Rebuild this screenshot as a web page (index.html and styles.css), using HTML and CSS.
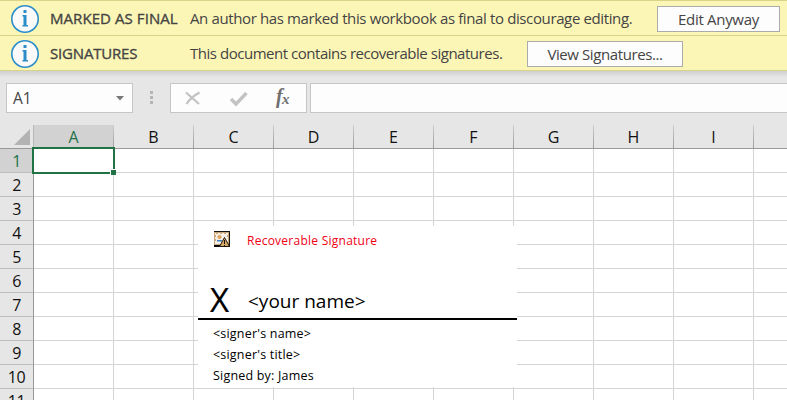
FILE: index.html
```html
<!DOCTYPE html>
<html lang="en">
<head>
<meta charset="utf-8">
<title>Workbook</title>
<link rel="stylesheet" href="styles.css">
</head>
<body>
<div class="app">
  <div class="message">
    <svg class="info" viewBox="0 0 28 28"><circle cx="14" cy="14" r="13.2" fill="#fafafa" stroke="#2b8dca" stroke-width="1.6"/><path d="M12.5 5h3v3h-3zM11.500 10h4v10H17v1.500h-5.500V20h1v-8.500h-1z" fill="#2b8dca"/></svg>
    <span class="heading"><span class="t-final">MARKED AS FINAL</span></span>
    <span class="body-text t-author">An author has marked this workbook as final to discourage editing.</span>
    <button class="edit"><span>Edit Anyway</span></button>
  </div>
  <div class="message">
    <svg class="info" viewBox="0 0 28 28"><circle cx="14" cy="14" r="13.2" fill="#fafafa" stroke="#2b8dca" stroke-width="1.6"/><path d="M12.5 5h3v3h-3zM11.500 10h4v10H17v1.500h-5.500V20h1v-8.500h-1z" fill="#2b8dca"/></svg>
    <span class="heading"><span class="t-sig">SIGNATURES</span></span>
    <span class="body-text t-doc">This document contains recoverable signatures.</span>
    <button class="view"><span>View Signatures...</span></button>
  </div>
  <div class="formula-bar">
    <div class="name-box"><span>A1</span><svg width="8" height="5" viewBox="0 0 8 5"><path d="M0 0h8L4 4.500z" fill="#777"/></svg></div>
    <div class="grip"><i></i><i></i><i></i></div>
    <div class="actions">
      <svg width="135" height="28" viewBox="0 0 135 28">
        <path d="M15 8.500 28 20M28.500 8.500Q20 13 15.500 20" fill="none" stroke="#c3c3c3" stroke-width="2.300"/>
        <path d="M60 15l5 5L75.500 9" fill="none" stroke="#c3c3c3" stroke-width="3.400"/>
        <text class="fx-f" x="105" y="19">f</text><text class="fx-x" x="111" y="20">x</text>
      </svg>
    </div>
    <div class="formula"></div>
  </div>
  <div class="sheet">
    <div class="corner"><svg width="16" height="16" viewBox="0 0 16 16"><path d="M16 0v16H0z" fill="#b3b3b3"/></svg></div>
    <div class="columns"><span class="active">A</span><span>B</span><span>C</span><span>D</span><span>E</span><span>F</span><span>G</span><span>H</span><span>I</span><span></span></div>
    <div class="rows"><span class="active">1</span><span>2</span><span>3</span><span>4</span><span>5</span><span>6</span><span>7</span><span>8</span><span>9</span><span>10</span><span>11</span></div>
    <div class="cells">
      <div class="selection"><i></i></div>
      <div class="signature">
        <div class="sig-top">
          <svg width="16" height="16" viewBox="0 0 16 16"><path d="M0 0h16v16H0z" fill="#17130f"/><path d="M0 1h15v13H0z" fill="#c9a77b"/><path d="M1 2h13v11H1z" fill="#f5efe5"/><path d="M2 2h2v1H2zM6 2h2v1H6zM10 2h2v1h-2zM1 4h1v2H1zM1 8h1v2H1zM13 4h1v2h-1z" fill="#c9a77b"/><circle cx="5.500" cy="6" r="2" fill="#dca45f"/><path d="M3 9h5v1.500H3z" fill="#3c80bd"/><path d="M0 14h7v2H0z" fill="#080808"/><path d="M10.500 6.500 15.500 15.500H5.500z" fill="#d5a865" stroke="#201710"/><path d="M10 9h1v4h-1zM10 14h1v1h-1z" fill="#17130f"/></svg>
          <span>Recoverable Signature</span>
        </div>
        <div class="sign-line"><span class="x">X</span><span class="your">&lt;your name&gt;</span></div>
        <div class="details"><span>&lt;signer's name&gt;</span><span>&lt;signer's title&gt;</span><span>Signed by: James</span></div>
      </div>
    </div>
  </div>
</div>
</body>
</html>
```
FILE: styles.css
```css
* { box-sizing: border-box; }
body { margin: 0; font-family: "Open Sans", "Noto Sans", sans-serif; color: #444; }
.app { width: 787px; height: 400px; overflow: hidden; background: #e6e6e6; border-top: 1px solid #d8d58b; }
.message { height: 35px; background: #fcf6b6; border-bottom: 1px solid #d8d58b; display: flex; align-items: center; padding-left: 11px; font-size: 15px; white-space: nowrap; }
.info { width: 28px; height: 28px; margin-right: 11px; flex: none; position: relative; top: 1px; }
.heading { width: 140px; flex: none; -webkit-text-stroke: .35px #444; }
.t-final { letter-spacing: .07px; }
.t-sig { letter-spacing: -.18px; }
.body-text { flex: none; }
.t-author { width: 467px; letter-spacing: -.375px; }
.t-doc { width: 337px; letter-spacing: -.47px; }
.message button { height: 26px; padding: 0; border: 1px solid #ababab; background: #fdfdfd; color: #444; font: 15px "Open Sans", sans-serif; letter-spacing: -.4px; line-height: 22px; position: relative; top: 1px; }
.message .edit { width: 123px; letter-spacing: -.3px; }
.message .view { width: 156px; }
.formula-bar { height: 54px; display: flex; align-items: flex-start; padding: 12px 0 0 6px; background: linear-gradient(#cfcfcf, #e6e6e6 6px); }
.name-box { width: 127px; height: 30px; background: #fdfdfd; border: 1px solid #c6c6c6; display: flex; align-items: center; justify-content: space-between; padding: 0 8px 0 6px; font-size: 15.5px; letter-spacing: 0; }
.grip { width: 37px; padding: 8px 0 0 17px; display: grid; gap: 2px; }
.grip i { width: 3px; height: 3px; background: #b5b5b5; }
.actions { width: 137px; height: 30px; background: #fdfdfd; border: 1px solid #c6c6c6; }
.actions svg { display: block; }
.fx-f, .fx-x { font-family: "Liberation Serif", serif; font-style: italic; font-weight: bold; fill: #707070; }
.fx-f { font-size: 20px; }
.fx-x { font-size: 15px; }
.formula { flex: 1; margin-left: 3px; height: 30px; background: #fdfdfd; border: 1px solid #c6c6c6; border-right: 0; }
.sheet { display: grid; grid-template-columns: 34px 1fr; grid-template-rows: 24px 275px; }
.corner { border-bottom: 1px solid #999; border-right: 1px solid #b8b8b8; display: flex; align-items: flex-end; justify-content: flex-end; padding: 0 3px 3px 0; }
.columns { display: flex; overflow: hidden; border-bottom: 1px solid #999; color: #111; }
.columns span { width: 80px; flex: none; text-align: center; font-size: 16px; line-height: 24px; border-right: 1px solid; border-image: linear-gradient(#d0d0d0, #999) 1; }
.columns .active, .rows .active { background: #d2d2d2; color: #217346; }
.rows { border-right: 1px solid #999; overflow: hidden; color: #111; }
.rows span { display: block; height: 24px; border-bottom: 1px solid #bdbdbd; text-align: center; font-size: 16px; line-height: 25px; letter-spacing: -.5px; }
.cells { position: relative; background: repeating-linear-gradient(90deg, transparent 0 79px, #d4d4d4 79px 80px), repeating-linear-gradient(#fff 0 23px, #d4d4d4 23px 24px); }
.selection { position: absolute; left: -2px; top: -2px; width: 83px; height: 27px; border: 2px solid #217346; }
.selection i { position: absolute; right: -3px; bottom: -3px; width: 6px; height: 6px; background: #217346; border: solid #fff; border-width: 1px 0 0 1px; }
.signature { position: absolute; left: 164px; top: 77px; width: 319px; height: 161px; background: #fff; color: #000; white-space: nowrap; }
.sig-top { height: 58px; padding: 5px 0 0 16px; display: flex; gap: 17px; align-items: flex-start; color: #f00014; font-size: 12px; letter-spacing: .25px; line-height: 19px; }
.sign-line { height: 36px; border-bottom: 2px solid #000; display: flex; align-items: flex-end; padding-left: 12px; }
.x { width: 38px; font-size: 33px; line-height: 36px; }
.x { -webkit-text-stroke: .2px #000; }
.your { font-size: 19px; line-height: 34px; }
.details { display: grid; grid-auto-rows: 21px; padding: 3px 0 0 15px; font-size: 12.5px; letter-spacing: .2px; line-height: 21px; }
```
